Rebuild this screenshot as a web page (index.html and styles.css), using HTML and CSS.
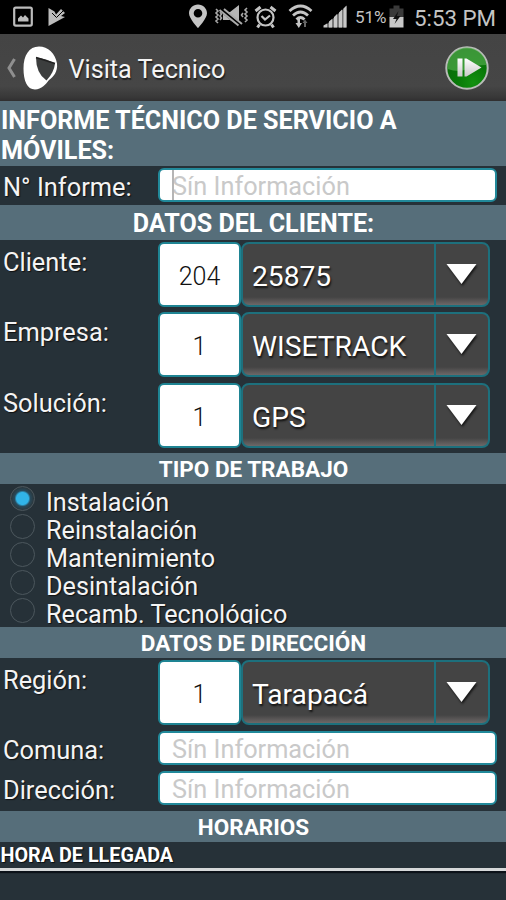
FILE: index.html
```html
<!DOCTYPE html>
<html lang="es">
<head>
<meta charset="utf-8">
<title>Visita Tecnico</title>
<link rel="stylesheet" href="styles.css">
</head>
<body>
<div class="status">
  <svg class="icons-left" width="80" height="34" viewBox="0 0 80 34">
    <rect x="14.200" y="7.600" width="17.600" height="18" rx="1.500" fill="none" stroke="#bcbcbc" stroke-width="2.200"/>
    <path d="M18 21.500v-3l3-3 2 2 2-2.500 3.500 3.500v3z" fill="#bcbcbc"/>
    <path d="M48.500 8l6 3.500 1.500 3 5-5.500 4 4-4 3 4 1-16.500 9z" fill="#bcbcbc"/>
    <path d="M52 13l4.500 4.500 8-8" fill="none" stroke="#000" stroke-width="1"/>
  </svg>
  <svg class="icons-right" width="168" height="34" viewBox="187 0 168 34">
    <path fill="#c4c4c4" fill-rule="evenodd" d="M198 4.500c-5 0-9 4-9 8.700 0 5.300 9 14.800 9 14.800s9-9.500 9-14.800c0-4.700-4-8.700-9-8.700zm0 4.500a4.300 4.300 0 1 1 0 8.600 4.300 4.300 0 0 1 0-8.600z"/>
    <g stroke="#aaa" fill="none" stroke-width="1.600">
      <path d="M216 9l2 2-2 2 2 2-2 2 2 2-2 2 2 2M220 12l1.500 2-1.500 2 1.500 2-1.500 2M247 8l-2 2 2 2-2 2 2 2-2 2 2 2-2 2M243 13l-1.500 2 1.500 2"/>
    </g>
    <path fill="#b5b5b5" d="M223 12h7l9-7v21l-9-6h-7z"/>
    <path d="M220 9l21 17" stroke="#000" stroke-width="4"/>
    <path d="M219.500 10l19 15.500M224 9l18 15" stroke="#aaa" stroke-width="2"/>
    <g fill="none" stroke="#c4c4c4" stroke-width="2.200">
      <circle cx="265.500" cy="17.500" r="8"/>
      <path d="M255.500 11l5-4M275.500 11l-5-4M259.500 24.500l-2 3M271.500 24.500l2 3" stroke-width="3"/>
      <path d="M261.500 16l3.500 3.500 5-4"/>
    </g>
    <g fill="none" stroke="#c4c4c4" stroke-width="2.800">
      <path d="M289.500 11q11-10 22 0M293 15.500q7.500-7 15 0M296.500 19.500q4-4 8 0"/>
    </g>
    <path d="M295.500 23h2v-4h2.500v4h2l-3.200 5z" fill="#c4c4c4"/>
    <path d="M304 27v-4h-1.500l2.500-3.500 2.500 3.500H306v4z" fill="#666"/>
    <path fill="#777" d="M327 27.500v-3.500l19.500-18v21.500z"/>
    <path fill="#c8c8c8" d="M323.500 27.500v-2l3.500-2v4zM329 27.500v-6l3-2.500v8.500zM334 27.500v-10.500l3-3v13.500zM339 27.500v-15l3-3v18zM343.500 27.500v-19l3-3v22z"/>
  </svg>
  <span class="pct">51%</span>
  <svg class="battery" width="16" height="34" viewBox="0 0 16 34">
    <path d="M4.500 5.500h6v3h4v9h-14v-9h4z" fill="#3a3a3a"/>
    <path d="M.5 17h14v10.500h-14z" fill="#c8c8c8"/>
    <path d="M9.500 11L4 19h3.500L5.500 24l6-8H8z" fill="#111"/>
  </svg>
  <span class="time">5:53 PM</span>
</div>

<div class="appbar">
  <svg class="brand" width="60" height="64" viewBox="0 0 60 64">
    <path d="M14.500 25L9 34l5.500 9" fill="none" stroke="#8f8f8f" stroke-width="3"/>
    <path fill="#fff" d="M39 12.500c9 0 16.500 7 18 17 .9 8-3.500 13.500-8 16.500-3 4-7.500 9.500-14 9.500-8 0-11.500-9-11.500-21 0-13 5.500-22 15.500-22z"/>
    <path d="M36 23.500q8 .5 19 6-1 9-8.500 17-10.500-7-10.500-23z" fill="#3c3e3e"/>
    <path d="M36 23.500l19 6" stroke="#222" stroke-width="1.500"/>
  </svg>
  <h1 class="apptitle">Visita Tecnico</h1>
  <svg class="play" width="46" height="46" viewBox="0 0 46 46">
    <defs>
      <radialGradient id="green" cx=".65" cy=".85" r=".8"><stop offset="0" stop-color="#129010"/><stop offset=".5" stop-color="#087808"/><stop offset="1" stop-color="#0c680c"/></radialGradient>
      <linearGradient id="silver" x2="0" y2="1"><stop offset="0" stop-color="#fff"/><stop offset="1" stop-color="#c9c9c9"/></linearGradient>
    </defs>
    <circle cx="23" cy="23" r="20.700" fill="url(#green)" stroke="#b9bcb9" stroke-width="2"/>
    <path d="M3.500 24A19.500 19.500 0 0 1 42.500 20Q31 20 23 24T3.500 24z" fill="#5bb455" opacity=".6"/>
    <path d="M13.500 13.500h5v18h-5zM20.500 13.500h2v18h-2zM22.500 13.500l15 9-15 9z" fill="url(#silver)"/>
  </svg>
</div>

<main>
  <h2 class="band band-main">INFORME TÉCNICO DE SERVICIO A MÓVILES:</h2>
  <div class="row row-informe"><label class="label">N° Informe:</label><div class="field"><i class="caret"></i>Sín Información</div></div>
  <h2 class="band band-client">DATOS DEL CLIENTE:</h2>
  <div class="group">
    <div class="row row-select"><label class="label">Cliente:</label><div class="num">204</div>
      <div class="select"><span class="value">25875</span><span class="arrow"><svg width="32" height="24" viewBox="0 0 32 24"><path d="M1.500 2h30L16.500 22z"/></svg></span></div></div>
    <div class="row row-select"><label class="label">Empresa:</label><div class="num">1</div>
      <div class="select"><span class="value">WISETRACK</span><span class="arrow"><svg width="32" height="24" viewBox="0 0 32 24"><path d="M1.500 2h30L16.500 22z"/></svg></span></div></div>
    <div class="row row-select"><label class="label">Solución:</label><div class="num">1</div>
      <div class="select"><span class="value">GPS</span><span class="arrow"><svg width="32" height="24" viewBox="0 0 32 24"><path d="M1.500 2h30L16.500 22z"/></svg></span></div></div>
  </div>
  <h2 class="band band-small">TIPO DE TRABAJO</h2>
  <div class="radios">
    <div class="radio"><i class="dot on"></i><span>Instalación</span></div>
    <div class="radio"><i class="dot"></i><span>Reinstalación</span></div>
    <div class="radio"><i class="dot"></i><span>Mantenimiento</span></div>
    <div class="radio"><i class="dot"></i><span>Desintalación</span></div>
    <div class="radio last"><i class="dot"></i><span>Recamb. Tecnológico</span></div>
  </div>
  <h2 class="band band-small">DATOS DE DIRECCIÓN</h2>
  <div class="group address">
    <div class="row row-select"><label class="label">Región:</label><div class="num">1</div>
      <div class="select"><span class="value">Tarapacá</span><span class="arrow"><svg width="32" height="24" viewBox="0 0 32 24"><path d="M1.500 2h30L16.500 22z"/></svg></span></div></div>
    <div class="row row-text"><label class="label">Comuna:</label><div class="field">Sín Información</div></div>
    <div class="row row-text"><label class="label">Dirección:</label><div class="field">Sín Información</div></div>
  </div>
  <h2 class="band band-small">HORARIOS</h2>
  <h3 class="arrival">HORA DE LLEGADA</h3>
</main>
</body>
</html>
```
FILE: styles.css
```css
* { box-sizing: border-box; }
body {
  margin: 0;
  width: 506px;
  height: 900px;
  overflow: hidden;
  background: #263138;
  color: #f4f4f4;
  font-family: Roboto, "Liberation Sans", sans-serif;
}
h1, h2, h3 { margin: 0; }
svg { display: block; flex: none; }

.status { display: flex; height: 34px; background: #000; color: #c4c4c4; }
.icons-right { margin-left: 107px; }
.pct { width: 34px; font-size: 17px; line-height: 35px; white-space: nowrap; }
.time { margin-left: 9px; font-size: 22.300px; line-height: 36px; white-space: nowrap; }

.appbar {
  display: flex;
  height: 67px;
  background: linear-gradient(#444 0, #464646 52px, #383838 63px, #302f30 67px);
}
.apptitle { margin-left: 8.500px; font-size: 25.200px; font-weight: 400; line-height: 72px; white-space: nowrap; text-shadow: 1px 2px 1px #222; }
.play { margin: 11px 16px 0 auto; }

.band {
  background: #566e7a;
  color: #fff;
  font-weight: 700;
  text-align: center;
  white-space: nowrap;
}
.band-main { height: 65px; padding: 5px 0 0 1px; font-size: 25.150px; line-height: 29.500px; text-align: left; white-space: normal; }
.band-client { height: 35px; padding-left: 1px; font-size: 25.100px; line-height: 38px; }
.band-small { height: 31px; padding-left: 1px; font-size: 22.500px; line-height: 33px; }

.row { display: flex; align-items: flex-start; }
.label { width: 155px; margin-left: 3px; font-size: 25.400px; line-height: 30px; white-space: nowrap; text-shadow: 1px 1px 1px #111; }
.field {
  position: relative;
  width: 339px;
  height: 34px;
  padding-left: 12px;
  border: 2px solid #21899a;
  border-radius: 6px;
  background: #fff;
  color: #c9c9c9;
  font-size: 25.300px;
  line-height: 34px;
  white-space: nowrap;
}
.caret { position: absolute; left: 12px; top: 0; width: 2px; height: 30px; background: #b5b5b5; }
.row-informe { height: 39px; padding-top: 2px; }
.row-informe .label { line-height: 39px; }
.row-text .label { line-height: 38px; }

.group { height: 213px; padding-top: 2px; }
.address { height: 153px; }
.row-select { height: 70.300px; }
.address .row-select { height: 70px; }
.row-select .label { padding-top: 5px; }
.num {
  width: 83px;
  height: 65px;
  border: 2px solid #1e8493;
  border-radius: 6px;
  background: #fff;
  color: #111;
  font-size: 25px;
  font-weight: 300;
  line-height: 65px;
  text-align: center;
}
.select {
  display: flex;
  width: 249px;
  height: 65px;
  border: 2px solid #1d707d;
  border-radius: 8px;
  background: linear-gradient(#444 0, #444 53px, #6d6868 61px);
}
.value { width: 191px; padding-left: 9px; color: #fff; font-size: 28.200px; line-height: 66px; white-space: nowrap; text-shadow: 1px 2px 2px #111; }
.arrow { display: flex; width: 54px; padding: 18px 0 0 9px; border-left: 2px solid #1d707d; }
.arrow path { fill: #fff; }
.arrow svg { filter: drop-shadow(1px 2px 1px #151515); }
.row-text { height: 40px; padding-top: 1px; }

.radios { height: 143px; }
.radio { display: flex; height: 28px; font-size: 25.200px; line-height: 38px; white-space: nowrap; text-shadow: 1px 1px 1px #111; }
.last { overflow: hidden; }
.dot { flex: none; width: 25px; height: 25px; margin: 2px 11px 0 10px; border: 1.500px solid #4c575d; border-radius: 50%; }
.on { background: radial-gradient(circle, #31b4e8 0, #31b4e8 6px, #28495a 8px, #2b3940 11px); }

.arrival {
  height: 29px;
  padding-left: .5px;
  font-size: 19.800px;
  line-height: 28px;
  white-space: nowrap;
  color: #fff;
  border-bottom: 3px solid #d6d8d9;
  box-shadow: 0 2px 1px #0c1219;
  text-shadow: 1px 1px 1px #080d11;
}
```
